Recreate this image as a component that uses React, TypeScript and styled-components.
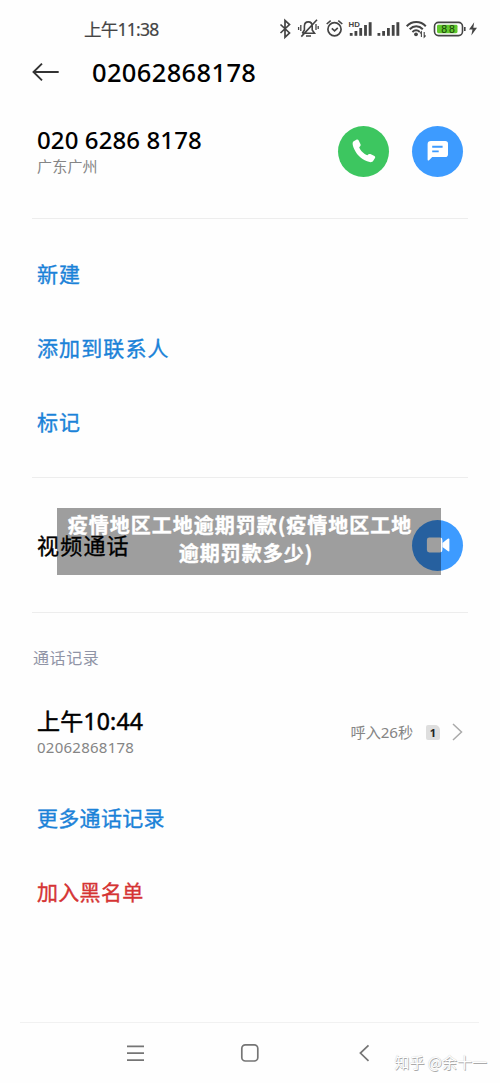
import React from "react";
import styled, { createGlobalStyle } from "styled-components";

const Global = createGlobalStyle`
  * { box-sizing: border-box; }
  body { margin: 0; background: #fefefe; }
  svg { display: block; flex: none; overflow: visible; }
`;

const Screen = styled.div`
  position: relative;
  width: 500px;
  height: 1083px;
  overflow: hidden;
  display: flex;
  flex-direction: column;
  background: #fefefe;
  color: #000;
  font-family: "Noto Sans", "Noto Sans CJK SC", sans-serif;
`;

const Label = styled.span<{
  $size: number;
  $color?: string;
  $weight?: number;
  $track?: number;
  $stroke?: number;
}>`
  display: block;
  white-space: nowrap;
  font-size: ${(p) => p.$size}px;
  line-height: 26px;
  color: ${(p) => p.$color ?? "#000"};
  font-weight: ${(p) => p.$weight ?? 400};
  letter-spacing: ${(p) => p.$track ?? 0}px;
  -webkit-text-stroke: ${(p) => p.$stroke ?? 0}px currentColor;
`;

const StatusBar = styled.header`
  height: 58px;
  padding: 0 22px 0 84px;
  display: flex;
  align-items: center;
  justify-content: space-between;
`;

const TitleBar = styled.div`
  height: 28px;
  padding-left: 32px;
  display: flex;
  align-items: center;
  gap: 33px;
`;

const Row = styled.section<{ $height: number; $lift?: number }>`
  height: ${(p) => p.$height}px;
  padding: 0 37px ${(p) => p.$lift ?? 0}px;
  display: flex;
  align-items: center;
  justify-content: space-between;
`;

const Stack = styled.div<{ $top?: number }>`
  display: flex;
  flex-direction: column;
  padding-top: ${(p) => p.$top ?? 0}px;
`;

const Buttons = styled.div`
  display: flex;
  gap: 23px;
`;

const RoundButton = styled.button<{ $color: string }>`
  width: 51px;
  height: 51px;
  padding: 0;
  border: 0;
  border-radius: 50%;
  display: grid;
  place-items: center;
  background: ${(p) => p.$color};
`;

const Divider = styled.div`
  height: 1px;
  margin: 0 32px;
  background: #ededed;
`;

const Actions = styled.div`
  padding: 18px 0;
`;

const SectionTitle = styled.div`
  height: 77px;
  padding: 32px 33px 0;
`;

const CallInfo = styled.div`
  display: flex;
  align-items: center;
`;

const SimBadge = styled.span`
  width: 14px;
  height: 15px;
  margin: 0 12px 0 13px;
  border-radius: 2px 5px 2px 2px;
  display: grid;
  place-items: center;
  background: #dedede;
  color: #222;
  font: 700 11px/15px "Noto Sans", sans-serif;
`;

const NavBar = styled.nav`
  height: 61px;
  margin: auto 21px 0 20px;
  border-top: 1px solid #f1f1f1;
  display: flex;
  align-items: center;
  padding-left: 106px;
`;

const Caption = styled.div`
  position: absolute;
  left: 57px;
  top: 508px;
  width: 384px;
  height: 67px;
  padding: 3px 0 0 2px;
  background: rgba(0, 0, 0, 0.376);
  color: #fff;
  text-align: center;
  font: 700 20px/28px "Noto Sans CJK SC", sans-serif;
  letter-spacing: 1px;
  -webkit-text-stroke: 0.4px #fff;
  white-space: nowrap;
`;

const CaptionLine = styled.div<{ $shift: number }>`
  padding-right: ${(p) => p.$shift}px;
`;

const Watermark = styled.div`
  position: absolute;
  right: 13px;
  bottom: 10px;
  color: #fff;
  font: 400 15px/22px "Noto Sans CJK SC", sans-serif;
  text-shadow: 0.7px 0.7px 0.5px #aaa, 0 0 1px #bbb;
  white-space: nowrap;
`;

const ink = "#444";

const StatusIcons = () => (
  <svg width="200" height="24" viewBox="278 17 200 24" fill="none" stroke={ink} strokeWidth="1.7">
    <path d="M280.5 24.5 289.5 33 285 37.2V20.4L289.5 24.5 280.5 33" />
    <path d="M302.3 33.2H314.5L312.2 30V26.2C312.2 20.5 304.5 20.4 304.4 26.2V30L302.3 33.2M306 36H311M317 19.8 301.3 36.6" strokeWidth="1.6" />
    <path d="M300.8 25V31M298.6 27V30M316 24V30M318.2 26V29" strokeWidth="1.3" />
    <circle cx="334.5" cy="29.3" r="6.6" />
    <path d="M331.8 28.3 334.6 30.8 337.8 27.8M326.7 24 330.7 20.7M342.3 24 338.3 20.7" strokeWidth="1.6" />
    <g stroke="none" fill={ink}>
      <text x="348.4" y="27" fontFamily="Liberation Sans, sans-serif" fontWeight="700" fontSize="7.8" textLength="11.5">HD</text>
      <rect x="349.8" y="33" width="2.8" height="2.8" />
      <rect x="354.5" y="31" width="2.8" height="4.8" />
      <rect x="359.3" y="28" width="2.8" height="7.8" />
      <rect x="364.1" y="25" width="2.8" height="10.8" />
      <rect x="368.7" y="22.2" width="2.9" height="13.6" />
      <rect x="377.5" y="33" width="2.8" height="2.8" />
      <rect x="382.2" y="31" width="2.8" height="4.8" />
      <rect x="387" y="28" width="2.8" height="7.8" />
      <rect x="391.8" y="25" width="2.8" height="10.8" />
      <rect x="396.4" y="22.2" width="2.9" height="13.6" />
      <circle cx="416" cy="34.3" r="1.9" />
    </g>
    <path d="M406.7 26.2C412 20.7 420.5 20.7 425.8 26.2M409.7 29.2C413.5 25.4 419 25.4 422.8 29.2M412.4 32C414.6 30 417.6 30 419.8 32" strokeWidth="2" />
    <path d="M421.4 37V31.9L420 33.4M424.2 32V37L425.6 35.5" strokeWidth="1.1" />
    <rect x="434.5" y="22.4" width="28" height="13.2" rx="4" strokeWidth="1.6" />
    <rect x="437" y="24.8" width="20.5" height="8.4" rx="1.4" fill="#62c92f" stroke="none" />
    <path d="M464.8 27V31" strokeWidth="1.6" />
    <text x="441.3" y="32.7" fill="#163c09" stroke="none" fontFamily="Liberation Sans, sans-serif" fontWeight="400" fontSize="10.5" textLength="13.5">88</text>
    <path d="M474.2 22.3 469 29.6H472.5L471.3 35.6 477 27.7H473.3Z" fill={ink} stroke="none" />
  </svg>
);

const BackArrow = () => (
  <svg width="27" height="20" viewBox="0 0 27 20" fill="none" stroke="#333" strokeWidth="1.9">
    <path d="M1.3 10H26.7M10 1.6 1.5 10 10 18.4" />
  </svg>
);

const PhoneIcon = () => (
  <svg width="24" height="24" viewBox="0 0 24 24" fill="#fff">
    <path d="M1.3 2.6 4.3 .7C5.5.1 6.2.5 6.7 1.6L8.5 5.2C9 6.4 8.4 7.1 7.2 8.2 8.3 11.4 11.9 15.1 15.4 16.3 16.5 15 17.2 14.6 18.4 15.1L22 16.8C23.1 17.4 23.5 18 23 19.1L21.1 22C20.3 23.5 17.6 23.4 15.1 22.3 8.7 19.8 3.8 14.7 1.4 8.2 .5 5.8.3 3.6 1.3 2.6Z" />
  </svg>
);

const MessageIcon = () => (
  <svg width="22" height="20" viewBox="0 0 22 20">
    <path d="M4 0H18.2Q21 0 21 2.8V13.2Q21 16 18.2 16H5.2L2.3 19C1.3 20 .6 19.8.6 18.3V3.2Q.6 0 4 0Z" fill="#fff" />
    <path d="M5.2 5.8H15.6M5.2 10.4H11.7" stroke="#3d9bff" strokeWidth="1.9" />
  </svg>
);

const VideoIcon = () => (
  <svg width="24" height="16" viewBox="0 0 24 16" fill="#fff">
    <rect x=".9" y=".5" width="15.5" height="15" rx="2.4" />
    <path d="M16.4 6 21.8 1.8Q23.4 1 23.4 2.6V13.4Q23.4 15 21.8 14.1L16.4 10Z" />
  </svg>
);

const Chevron = () => (
  <svg width="11" height="18" viewBox="0 0 11 18" fill="none" stroke="#aaa" strokeWidth="1.5">
    <path d="M1 1 9.5 9 1 17" />
  </svg>
);

const NavIcons = () => (
  <svg width="244" height="20" viewBox="126 1043 244 20" fill="none" stroke="#757575" strokeWidth="1.7">
    <path d="M127 1046.3H144M127 1053.2H144M127 1060.2H144" />
    <rect x="241.8" y="1044.8" width="16" height="16.2" rx="3.6" />
    <path d="M368.5 1045.4 360.4 1053.1 368.5 1060.8" />
  </svg>
);

const blue = "#1b82d8";

const Action = ({ text, color = blue, track = 1.1 }: { text: string; color?: string; track?: number }) => (
  <Row $height={74}>
    <Label $size={21} $color={color} $track={track} $stroke={0.35}>{text}</Label>
  </Row>
);

export default function App() {
  return (
    <Screen>
      <Global />
      <StatusBar>
        <Label $size={17.5} $color={ink} $stroke={0.2} $track={-0.75}>上午11:38</Label>
        <StatusIcons />
      </StatusBar>
      <TitleBar>
        <BackArrow />
        <Label $size={25.5} $weight={500} $track={0.35}>02062868178</Label>
      </TitleBar>
      <Row $height={132} $lift={2}>
        <Stack $top={4}>
          <Label $size={24} $weight={500} $track={0.1}>020 6286 8178</Label>
          <Label $size={15} $color="#858585" $track={0.2}>广东广州</Label>
        </Stack>
        <Buttons>
          <RoundButton $color="#3dc660"><PhoneIcon /></RoundButton>
          <RoundButton $color="#3d9bff"><MessageIcon /></RoundButton>
        </Buttons>
      </Row>
      <Divider />
      <Actions>
        <Action text="新建" />
        <Action text="添加到联系人" />
        <Action text="标记" />
      </Actions>
      <Divider />
      <Row $height={134}>
        <Label $size={22} $track={1.2} $stroke={0.35}>视频通话</Label>
        <RoundButton $color="#3d9bff"><VideoIcon /></RoundButton>
      </Row>
      <Divider />
      <SectionTitle>
        <Label $size={16} $color="#9094a6" $track={0.6}>通话记录</Label>
      </SectionTitle>
      <Row $height={91} $lift={7}>
        <Stack $top={4}>
          <Label $size={23} $stroke={0.5} $track={0.2}>上午10:44</Label>
          <Label $size={15} $color="#858585" $track={0.25}>02062868178</Label>
        </Stack>
        <CallInfo>
          <Label $size={15.2} $color="#858585" $track={-0.1}>呼入26秒</Label>
          <SimBadge>1</SimBadge>
          <Chevron />
        </CallInfo>
      </Row>
      <Action text="更多通话记录" track={0.3} />
      <Action text="加入黑名单" color="#d53434" track={0.3} />
      <NavBar>
        <NavIcons />
      </NavBar>
      <Caption>
        <CaptionLine $shift={20}>疫情地区工地逾期罚款(疫情地区工地</CaptionLine>
        <CaptionLine $shift={8}>逾期罚款多少)</CaptionLine>
      </Caption>
      <Watermark>知乎 @余十一</Watermark>
    </Screen>
  );
}
